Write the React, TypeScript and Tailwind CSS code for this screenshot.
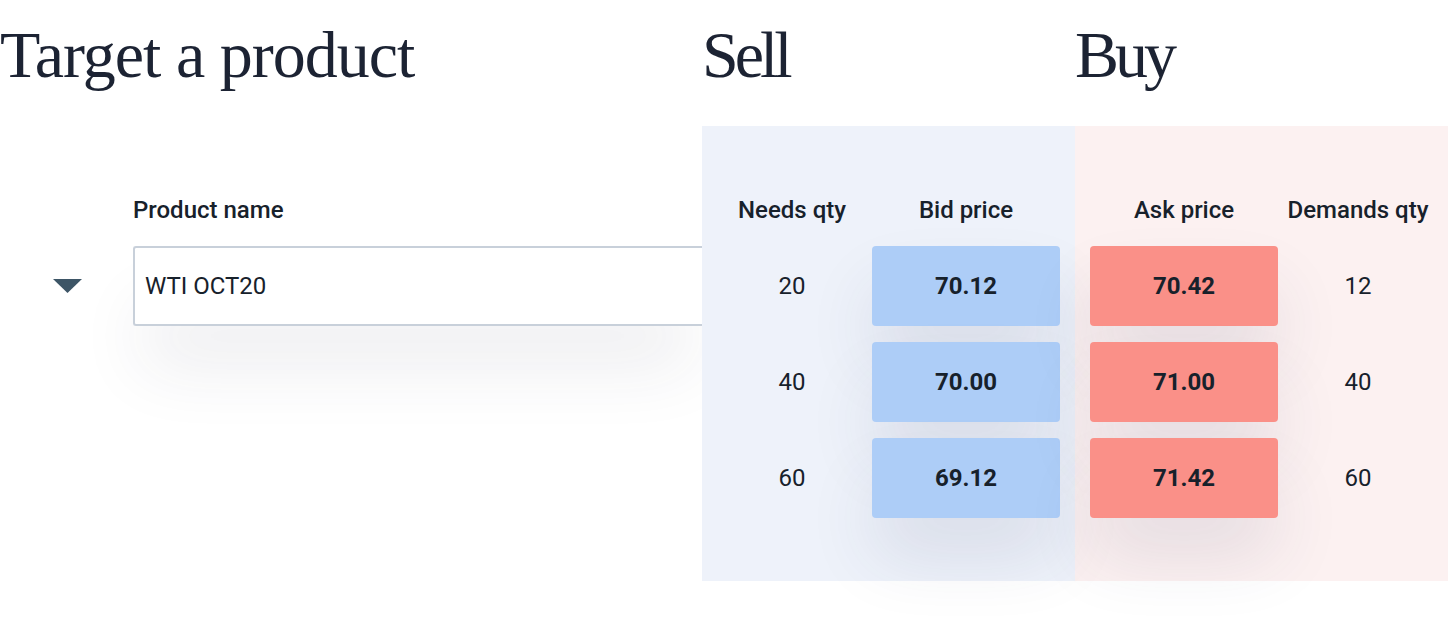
import React from 'react';

const rows = [
  { need: 20, bid: '70.12', ask: '70.42', demand: 12 },
  { need: 40, bid: '70.00', ask: '71.00', demand: 40 },
  { need: 60, bid: '69.12', ask: '71.42', demand: 60 },
];

const serif = "font-['Liberation_Serif',serif] text-[66px] leading-none text-[#1c2333] pt-[22px] h-[126px]";

export default function App() {
  return (
    <div className="w-[1448px] h-[638px] overflow-hidden bg-white font-['Roboto',sans-serif] text-[#17212b]">
      <div className="flex">
        {/* Left: product picker */}
        <div className="w-[702px] shrink-0">
          <h1 className={`${serif} tracking-[-1px]`}>Target a product</h1>
          <div className="pl-[133px] mt-[70px] text-[24px] leading-[28px] font-medium">Product name</div>
          <div className="flex items-center mt-[22px]">
            <div className="w-[133px] flex justify-start pl-[53px]">
              <svg width="29" height="14" viewBox="0 0 29 14">
                <path d="M0 0h29L14.5 14z" fill="#3d5566" />
              </svg>
            </div>
            <div className="flex-1 h-[80px] flex items-center pl-[10px] bg-white border-2 border-r-0 border-[#c8d0da] rounded-l-[3px] text-[24px] shadow-[0_50px_70px_-10px_rgba(40,45,80,0.09)]">
              WTI OCT20
            </div>
          </div>
        </div>

        {/* Sell */}
        <div className="w-[373px] shrink-0">
          <h2 className={`${serif} tracking-[-4px]`}>Sell</h2>
          <div className="h-[455px] bg-[#eef2fa] pl-[10px] pt-[70px]">
            <div className="flex text-[24px] leading-[28px] font-medium mb-[22px]">
              <div className="w-[160px] text-center">Needs qty</div>
              <div className="w-[188px] text-center">Bid price</div>
            </div>
            <div className="flex flex-col gap-[16px]">
              {rows.map((r) => (
                <div key={r.bid} className="flex items-center h-[80px] text-[24px]">
                  <div className="w-[160px] text-center">{r.need}</div>
                  <div className="relative w-[188px] h-[80px] flex items-center justify-center rounded-[4px] bg-[#adcdf7] font-bold shadow-[0_40px_70px_-4px_rgba(50,60,100,0.12)]">
                    {r.bid}
                  </div>
                </div>
              ))}
            </div>
          </div>
        </div>

        {/* Buy */}
        <div className="w-[373px] shrink-0">
          <h2 className={`${serif} tracking-[-4px]`}>Buy</h2>
          <div className="h-[455px] bg-[#fcf1f1] pl-[15px] pt-[70px]">
            <div className="flex text-[24px] leading-[28px] font-medium mb-[22px]">
              <div className="w-[188px] text-center">Ask price</div>
              <div className="w-[160px] text-center">Demands qty</div>
            </div>
            <div className="flex flex-col gap-[16px]">
              {rows.map((r) => (
                <div key={r.ask} className="flex items-center h-[80px] text-[24px]">
                  <div className="relative w-[188px] h-[80px] flex items-center justify-center rounded-[4px] bg-[#fa9088] font-bold shadow-[0_40px_70px_-4px_rgba(50,60,100,0.12)]">
                    {r.ask}
                  </div>
                  <div className="w-[160px] text-center">{r.demand}</div>
                </div>
              ))}
            </div>
          </div>
        </div>
      </div>
    </div>
  );
}
